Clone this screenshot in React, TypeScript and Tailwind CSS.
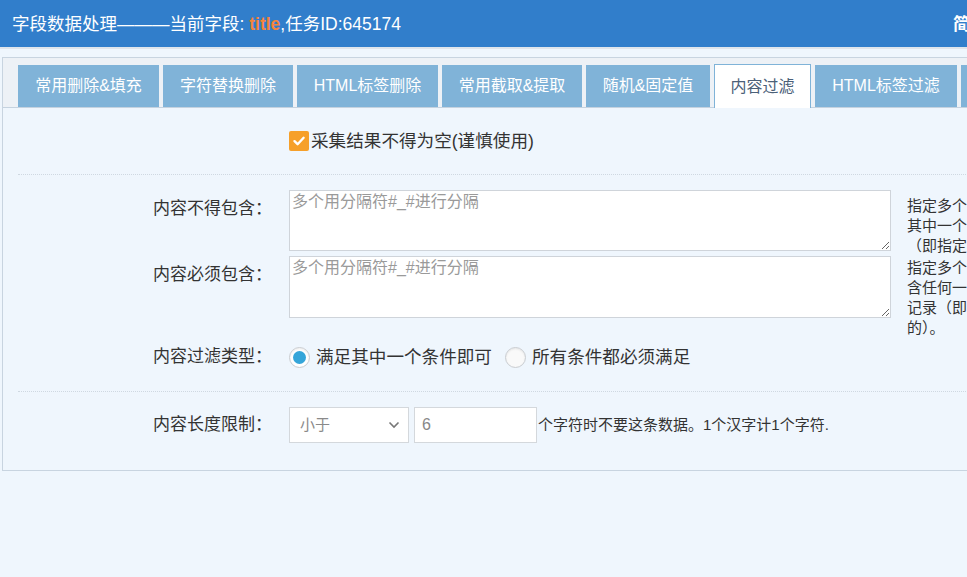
import React from 'react';

const tabs = [
    { name: '常用删除&填充', w: 'w-[141px]' },
    { name: '字符替换删除', w: 'w-[130px]' },
    { name: 'HTML标签删除', w: 'w-[141px]' },
    { name: '常用截取&提取', w: 'w-[140px]' },
    { name: '随机&固定值', w: 'w-[124px]' },
    { name: '内容过滤', w: 'w-[97px]', active: true },
    { name: 'HTML标签过滤', w: 'w-[142px]' },
    { name: '代码转换', w: 'w-[110px]' },
];

const Radio: React.FC<{ checked?: boolean; label: string }> = ({ checked, label }) => (
    <label className="flex items-center gap-[6px] cursor-pointer">
        <span
            className={`flex h-[21px] w-[21px] items-center justify-center rounded-full border border-[#c9ccd0] shadow-[inset_0_1px_2px_rgba(0,0,0,0.08)] ${
                checked ? 'bg-white' : 'bg-[#f9f9f9]'
            }`}
        >
            {checked && <span className="h-[13px] w-[13px] rounded-full bg-[#35a5d9]" />}
        </span>
        <span className="text-[17.6px]">{label}</span>
    </label>
);

const App: React.FC = () => {
    return (
        <div className="h-[577px] w-[967px] overflow-hidden bg-[#eff6fd] font-[family-name:'Liberation_Sans','Noto_Sans_CJK_SC',sans-serif] text-[#333]">
            {/* header */}
            <div className="grid h-[47px] grid-cols-[941px_auto] items-center bg-[#317ecb] px-[12px] text-white">
                <div className="whitespace-nowrap text-[17.5px] leading-[24px]">
                    字段数据处理———当前字段: <span className="font-bold text-[#f5843a]">title</span>,任务ID:645174
                </div>
                <div className="whitespace-nowrap text-[17.5px] font-bold leading-[24px]">简体中文</div>
            </div>
            <div className="h-[2px] bg-[#dfe5ec]" />

            {/* panel */}
            <div className="ml-[2px] mt-[8px] w-[1240px] border border-[#c8d4e0]">
                <div className="flex h-[50px] items-end gap-[4px] border-b border-[#c5d2df] bg-[#edf1f6] pl-[15px]">
                    {tabs.map((t) =>
                        t.active ? (
                            <div
                                key={t.name}
                                className={`${t.w} -mb-px flex h-[44px] shrink-0 items-center justify-center border border-b-0 border-[#7fb3d8] bg-white text-[16px] text-[#4b6078]`}
                            >
                                {t.name}
                            </div>
                        ) : (
                            <div
                                key={t.name}
                                className={`${t.w} flex h-[42px] shrink-0 items-center justify-center bg-[#80b3d8] text-[16px] text-white`}
                            >
                                {t.name}
                            </div>
                        )
                    )}
                </div>

                <div className="px-[15px] text-[17px] leading-[24px]">
                    {/* checkbox row */}
                    <div className="flex h-[67px] items-center border-b border-dotted border-[#cfd8e1] pl-[271px]">
                        <span className="flex h-[20px] w-[20px] items-center justify-center rounded-[2px] bg-[#f6a02a]">
                            <svg width="14" height="14" viewBox="0 0 14 14" fill="none">
                                <path d="M2.5 7.2 L5.6 10.2 L11.6 3.8" stroke="white" strokeWidth="2.4" strokeLinecap="round" strokeLinejoin="round" />
                            </svg>
                        </span>
                        <span className="ml-[2px] text-[17.6px]">采集结果不得为空(谨慎使用)</span>
                    </div>

                    {/* not contain */}
                    <div className="mt-[15px] flex h-[61px] items-start">
                        <div className="w-[254px] shrink-0 pt-[7px] text-right">内容不得包含：</div>
                        <textarea
                            className="ml-[17px] h-[61px] w-[602px] shrink-0 border border-[#cfd4da] bg-white px-[2px] py-[1px] text-[16px] leading-[20px] outline-none placeholder:text-[#9a9a9a]"
                            placeholder="多个用分隔符#_#进行分隔"
                        />
                        <div className="ml-[16px] whitespace-nowrap pt-[6px] text-[15px] leading-[20px]">
                            <div>指定多个值用#_#分隔，内容包含</div>
                            <div>其中一个值时不要这条记录</div>
                            <div>（即指定的值都不能出现）</div>
                        </div>
                    </div>

                    {/* must contain */}
                    <div className="mt-[5px] flex items-start">
                        <div className="w-[254px] shrink-0 pt-[7px] text-right">内容必须包含：</div>
                        <textarea
                            className="ml-[17px] h-[62px] w-[602px] shrink-0 border border-[#cfd4da] bg-white px-[2px] py-[1px] text-[16px] leading-[20px] outline-none placeholder:text-[#9a9a9a]"
                            placeholder="多个用分隔符#_#进行分隔"
                        />
                        <div className="ml-[16px] whitespace-nowrap pt-[2px] text-[15px] leading-[20px]">
                            <div>指定多个值用#_#分隔，内容不包</div>
                            <div>含任何一个值时就不要这条</div>
                            <div>记录（即至少要出现一个指定</div>
                            <div>的）。</div>
                        </div>
                    </div>

                    {/* filter type */}
                    <div className="border-b border-dotted border-[#cfd8e1] pb-[22px] pt-[7px]">
                        <div className="flex h-[24px] items-center">
                            <div className="w-[254px] shrink-0 text-right">内容过滤类型：</div>
                            <div className="ml-[17px] flex items-center gap-[13px]">
                                <Radio checked label="满足其中一个条件即可" />
                                <Radio label="所有条件都必须满足" />
                            </div>
                        </div>
                    </div>

                    {/* length limit */}
                    <div className="flex items-center pb-[27px] pt-[15px]">
                        <div className="w-[254px] shrink-0 text-right">内容长度限制：</div>
                        <div className="relative ml-[17px] h-[36px] w-[120px] shrink-0">
                            <select className="h-full w-full appearance-none border border-[#d4d8dc] bg-white pl-[10px] text-[15px] text-[#8a8a8a] outline-none">
                                <option>小于</option>
                                <option>大于</option>
                            </select>
                            <svg
                                className="pointer-events-none absolute right-[9px] top-[14px]"
                                width="12"
                                height="8"
                                viewBox="0 0 12 8"
                                fill="none"
                            >
                                <path d="M1.5 1.5 L6 6 L10.5 1.5" stroke="#777" strokeWidth="1.6" />
                            </svg>
                        </div>
                        <input
                            className="ml-[5px] h-[36px] w-[123px] shrink-0 border border-[#d4d8dc] bg-white px-[7px] text-[16px] text-[#888] outline-none"
                            defaultValue="6"
                        />
                        <span className="ml-[1px] whitespace-nowrap text-[15px]">个字符时不要这条数据。1个汉字计1个字符.</span>
                    </div>
                </div>
            </div>
        </div>
    );
};

export default App;
